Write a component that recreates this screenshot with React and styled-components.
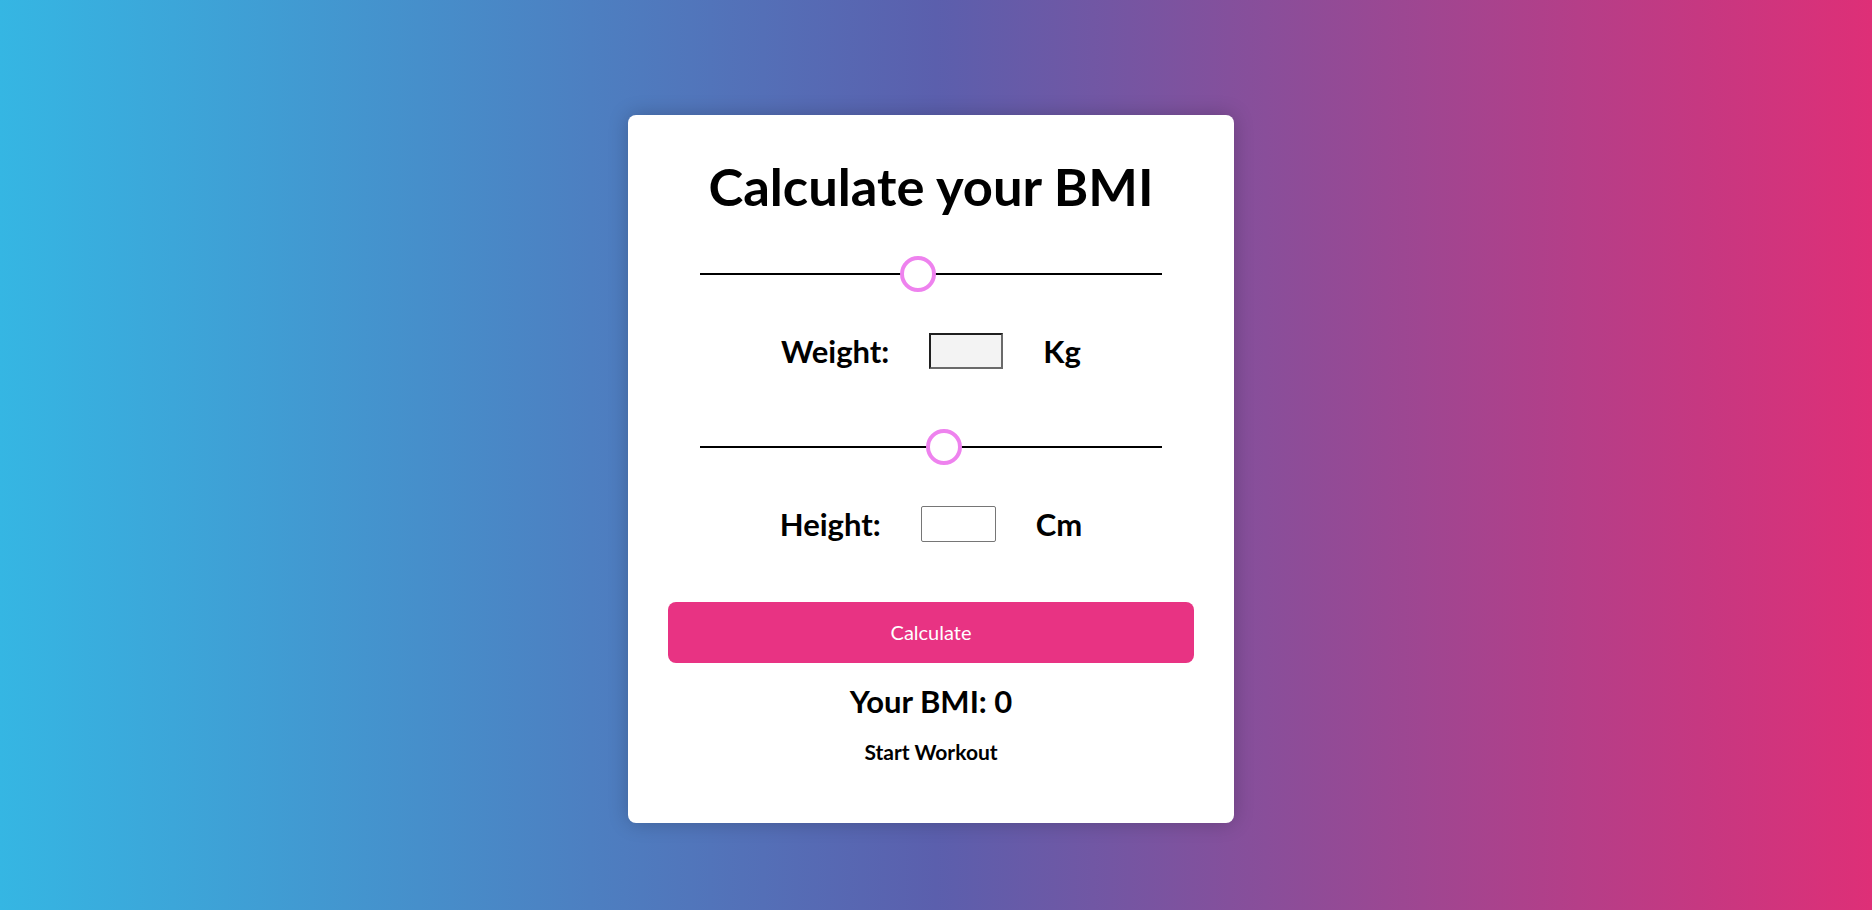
import React, { useState } from "react";
import styled, { createGlobalStyle } from "styled-components";

const GlobalStyle = createGlobalStyle`
  * { box-sizing: border-box; }
  html, body { margin: 0; padding: 0; }
  body {
    font-family: Lato, "Open Sans", sans-serif;
    color: #000;
  }
`;

const Page = styled.div`
  min-height: 100vh;
  display: flex;
  justify-content: center;
  align-items: flex-start;
  padding: 115px 10px 0 0;
  background: linear-gradient(to right, #35b6e3 0%, #5b5fad 50%, #de2f77 100%);
`;

const Card = styled.div`
  width: 606px;
  background: #fff;
  border-radius: 8px;
  padding: 39px 40px 59px;
  display: flex;
  flex-direction: column;
  align-items: center;
  box-shadow: 0 0 20px rgba(0, 0, 0, 0.22);
`;

const Title = styled.h1`
  margin: 0;
  font-size: 52.5px;
  line-height: 1.2;
  font-weight: 700;
`;

const Group = styled.div`
  display: flex;
  flex-direction: column;
  align-items: center;
  gap: 41px;
  margin-top: ${(p) => p.$top}px;
`;

const Slider = styled.input`
  -webkit-appearance: none;
  appearance: none;
  width: 462px;
  height: 36px;
  margin: 0;
  background: transparent;
  display: block;

  &::-webkit-slider-runnable-track {
    height: 2px;
    background: #000;
  }
  &::-webkit-slider-thumb {
    -webkit-appearance: none;
    width: 36px;
    height: 36px;
    border-radius: 50%;
    background: #fff;
    border: 4px solid #ee82ee;
    margin-top: -17px;
  }
  &:focus { outline: none; }
`;

const Row = styled.div`
  display: flex;
  align-items: center;
  gap: 40px;
  height: 36px;
`;

const Label = styled.span`
  font-size: 31px;
  line-height: 36px;
  font-weight: 700;
`;

const NumberBox = styled.input`
  width: ${(p) => p.$w}px;
  height: 36px;
  margin: 0;
  font-family: inherit;
  font-size: 16px;
  padding: 0 4px;
  ${(p) =>
    p.$inset
      ? `
    border: 2px solid;
    border-color: #1f1f1f #6a6a6a #6a6a6a #1f1f1f;
    background: #f3f3f3;
    border-radius: 0;
  `
      : `
    border: 1px solid #767676;
    background: #fff;
    border-radius: 2px;
  `}
  &:focus { outline: none; }
`;

const Button = styled.button`
  width: 100%;
  height: 61.5px;
  margin-top: 60px;
  border: none;
  border-radius: 8px;
  background: #e83383;
  color: #fff;
  font-family: inherit;
  font-size: 20px;
  font-weight: 400;
  cursor: pointer;
`;

const Result = styled.h2`
  margin: 20px 0 0;
  font-size: 31px;
  line-height: 1.2;
  font-weight: 700;
`;

const Link = styled.a`
  margin-top: 19px;
  font-size: 21px;
  line-height: 1.2;
  font-weight: 700;
  color: #000;
  text-decoration: none;
`;

export default function App() {
  const [weight, setWeight] = useState(47);
  const [height, setHeight] = useState(53);
  return (
    <>
      <GlobalStyle />
      <Page>
        <Card>
          <Title>Calculate your BMI</Title>
          <Group $top={38.5}>
            <Slider
              type="range"
              min="0"
              max="100"
              value={weight}
              onChange={(e) => setWeight(e.target.value)}
            />
            <Row>
              <Label>Weight:</Label>
              <NumberBox type="text" $w={74} $inset />
              <Label>Kg</Label>
            </Row>
          </Group>
          <Group $top={60}>
            <Slider
              type="range"
              min="0"
              max="100"
              value={height}
              onChange={(e) => setHeight(e.target.value)}
            />
            <Row>
              <Label>Height:</Label>
              <NumberBox type="text" $w={75} />
              <Label>Cm</Label>
            </Row>
          </Group>
          <Button>Calculate</Button>
          <Result>Your BMI: 0</Result>
          <Link href="#">Start Workout</Link>
        </Card>
      </Page>
    </>
  );
}
